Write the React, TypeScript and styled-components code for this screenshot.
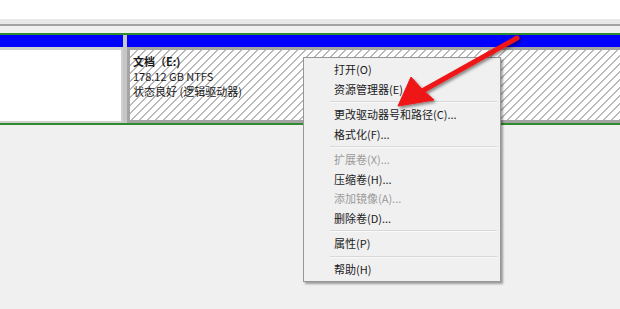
import styled, { createGlobalStyle } from 'styled-components';

const GlobalStyle = createGlobalStyle`
  html, body {
    margin: 0;
    padding: 0;
    background: #f0f0f0;
  }
  body {
    font-family: "Microsoft YaHei UI", "Noto Sans CJK SC", sans-serif;
    font-size: 11px;
    color: #1a1a1a;
  }
`;

const Page = styled.div`
  position: relative;
  width: 620px;
  height: 309px;
  overflow: hidden;
  background: #f0f0f0;
`;

const ListPane = styled.div`
  height: 19px;
  background: #fff;
`;

const Splitter = styled.div`
  height: 5px;
  background: #e8e8e8;
  border-bottom: 2px solid #a3a3a3;
  margin-bottom: 7px;
`;

const DiskRow = styled.div`
  display: flex;
  gap: 4px;
  height: 88px;
  margin: 0 -6px 0 -3px;
  background: #c6c6c6;
  border-top: 2px solid #2e8b2e;
  border-bottom: 2px solid #2e8b2e;
`;

const Volume = styled.div<{ $width?: number }>`
  display: flex;
  flex-direction: column;
  flex: ${(p) => (p.$width ? `0 0 ${p.$width}px` : '1')};
`;

const VolumeHeader = styled.div`
  height: 12px;
  background: #0000ff;
`;

const VolumeBody = styled.div<{ $selected?: boolean }>`
  flex: 1;
  padding: 4px 3px;
  line-height: 15px;
  border: ${(p) => (p.$selected ? '3px solid #a4a4a4' : '2px solid #cfcfcf')};
  border-top-width: 3px;
  background: ${(p) =>
    p.$selected
      ? 'repeating-linear-gradient(135deg, #fff 0 4.6px, #b9b9b9 4.6px 5.66px)'
      : '#fff'};
`;

const VolumeName = styled.div`
  font-weight: bold;
`;

const Menu = styled.div`
  position: absolute;
  left: 303px;
  top: 57px;
  width: 192px;
  padding: 2px;
  background: #f0f0f0;
  border: 1px solid #979797;
  box-shadow: 2px 2px 2px rgba(0, 0, 0, 0.35);
`;

const MenuItem = styled.div<{ $disabled?: boolean }>`
  height: 19.5px;
  line-height: 19.5px;
  padding-left: 28px;
  color: ${(p) => (p.$disabled ? '#9a9a9a' : '#1a1a1a')};
  white-space: nowrap;
`;

const MenuSeparator = styled.div`
  height: 6px;
  display: flex;
  align-items: center;
  margin: 0 1px 0 24px;

  &::after {
    content: '';
    flex: 1;
    border-top: 1px solid #d7d7d7;
    border-bottom: 1px solid #fafafa;
  }
`;

const Overlay = styled.svg`
  position: absolute;
  left: 0;
  top: 0;
  pointer-events: none;
`;

type Entry = { label: string; disabled?: boolean } | 'sep';

const entries: Entry[] = [
  { label: '打开(O)' },
  { label: '资源管理器(E)' },
  'sep',
  { label: '更改驱动器号和路径(C)...' },
  { label: '格式化(F)...' },
  'sep',
  { label: '扩展卷(X)...', disabled: true },
  { label: '压缩卷(H)...' },
  { label: '添加镜像(A)...', disabled: true },
  { label: '删除卷(D)...' },
  'sep',
  { label: '属性(P)' },
  'sep',
  { label: '帮助(H)' },
];

const Arrow = () => (
  <Overlay width={620} height={309} viewBox="0 0 620 309">
    <defs>
      <filter id="shadow" x="-20%" y="-20%" width="140%" height="140%">
        <feDropShadow dx="1.5" dy="2" stdDeviation="1.5" floodColor="#000" floodOpacity="0.45" />
      </filter>
    </defs>
    <g filter="url(#shadow)" fill="#ee1515" stroke="#ee1515">
      <line x1={517} y1={38} x2={424} y2={90} strokeWidth={5} strokeLinecap="round" />
      <polygon points="398,106 411,77 422,89 434,100" strokeWidth={1} strokeLinejoin="round" />
    </g>
  </Overlay>
);

const App = () => (
  <Page>
    <GlobalStyle />
    <ListPane />
    <Splitter />
    <DiskRow>
      <Volume $width={126}>
        <VolumeHeader />
        <VolumeBody />
      </Volume>
      <Volume>
        <VolumeHeader />
        <VolumeBody $selected>
          <VolumeName>文档（E:)</VolumeName>
          <div>178.12 GB NTFS</div>
          <div>状态良好 (逻辑驱动器)</div>
        </VolumeBody>
      </Volume>
    </DiskRow>
    <Menu>
      {entries.map((e, i) =>
        e === 'sep' ? (
          <MenuSeparator key={i} />
        ) : (
          <MenuItem key={i} $disabled={e.disabled}>
            {e.label}
          </MenuItem>
        )
      )}
    </Menu>
    <Arrow />
  </Page>
);

export default App;
